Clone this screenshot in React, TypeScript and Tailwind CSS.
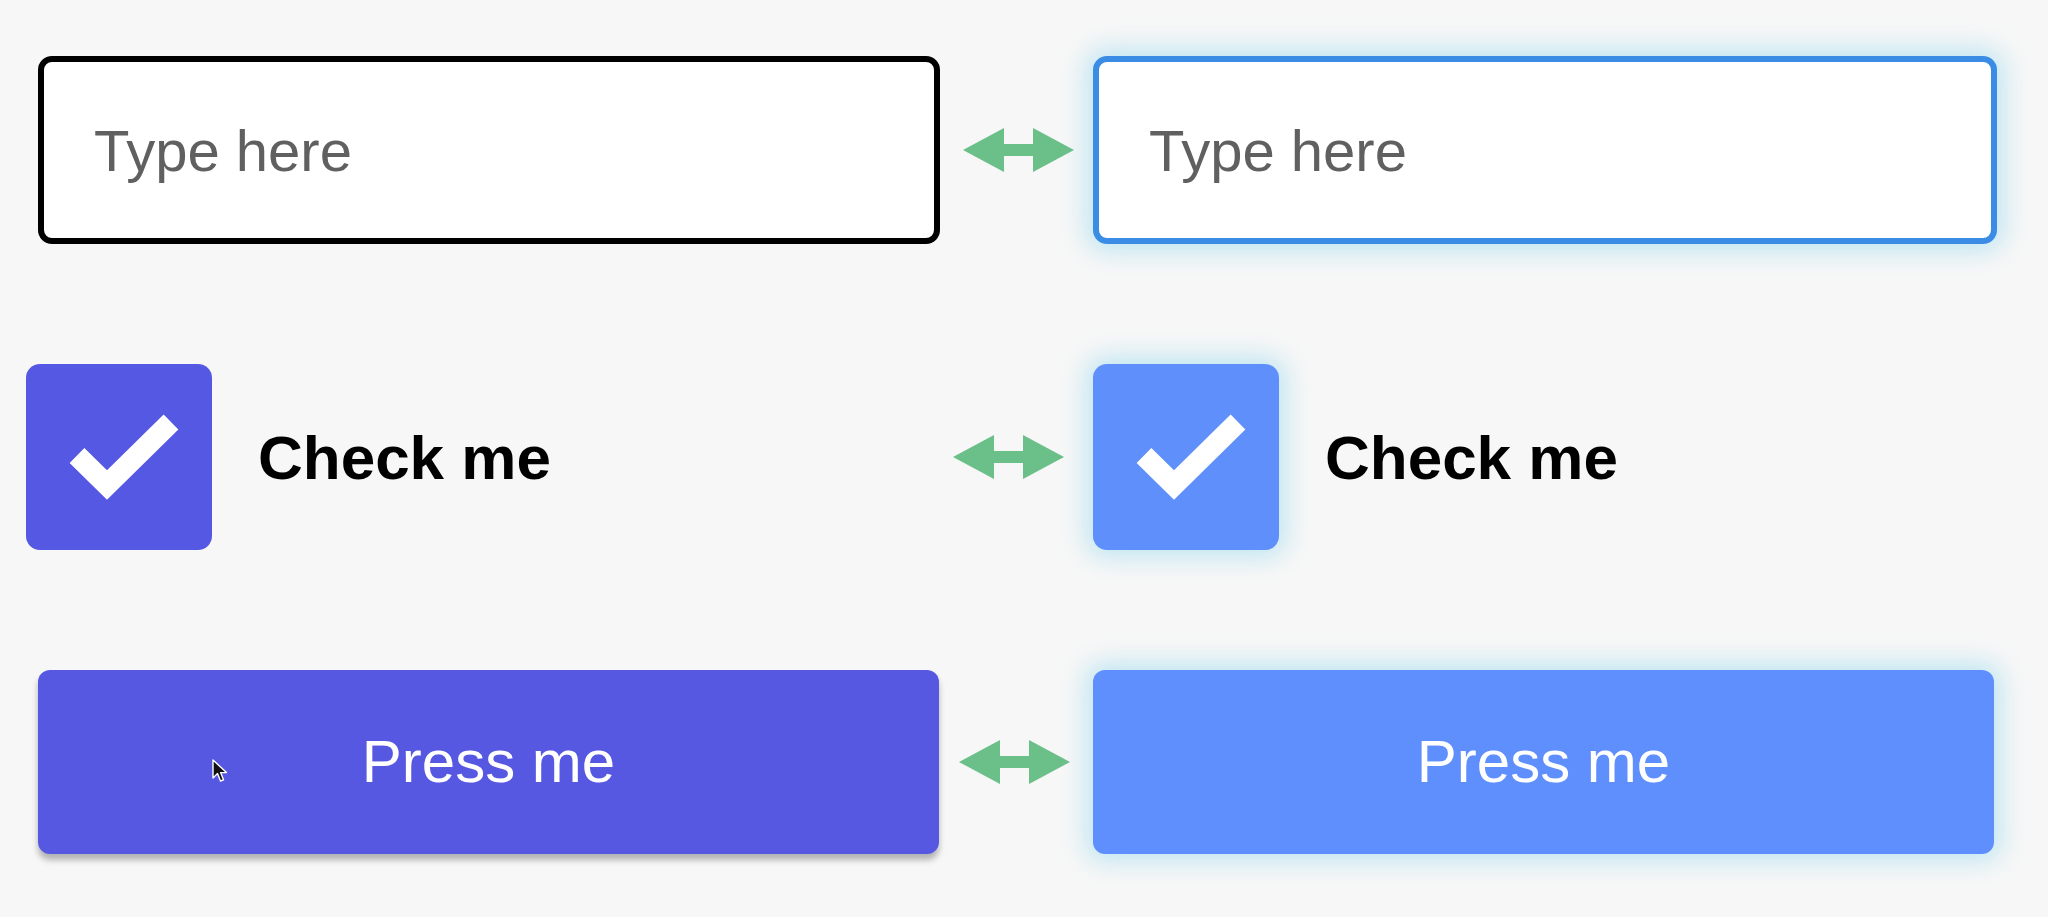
const font = "font-['Liberation_Sans',Arial,sans-serif]";

const Arrow = ({ className = "" }: { className?: string }) => (
  <svg width="111" height="44" viewBox="0 0 111 44" className={className}>
    <path d="M0 22 L41 0 L41 16 L70 16 L70 0 L111 22 L70 44 L70 28 L41 28 L41 44 Z" fill="#6bbf88" />
  </svg>
);

const Check = () => (
  <svg width="186" height="186" viewBox="0 0 186 186">
    <polyline points="51,91.5 81,121 145,58" fill="none" stroke="#fff" strokeWidth="21" strokeLinejoin="miter" />
  </svg>
);

const Cursor = () => (
  <svg width="16" height="25" viewBox="0 0 16 25" className="absolute left-[174px] top-[89px]">
    <path d="M1 1 L1 19 L5.5 14.5 L8.5 22 L11.5 20.8 L8.6 13.6 L14.5 13.6 Z" fill="#111" stroke="#fff" strokeWidth="1.4" strokeLinejoin="round" />
  </svg>
);

export default function App() {
  return (
    <div className={`min-h-[917px] w-full bg-[#f7f7f7] pl-[38px] pt-[56px] ${font}`}>
      <div className="flex flex-col gap-[120px]">
        <div className="flex items-center">
          <input
            type="text"
            placeholder="Type here"
            className="h-[188px] w-[902px] rounded-[14px] border-[6px] border-black bg-white pl-[50px] text-[58px] text-[#606060] outline-none placeholder:text-[#606060]"
          />
          <div className="flex w-[153px] justify-center">
            <Arrow className="ml-[3px]" />
          </div>
          <input
            type="text"
            placeholder="Type here"
            className="h-[188px] w-[904px] rounded-[14px] border-[6px] border-[#3a8ce4] bg-white pl-[50px] text-[58px] text-[#606060] shadow-[0_0_24px_8px_rgba(130,210,238,0.45)] outline-none placeholder:text-[#606060]"
          />
        </div>

        <div className="flex items-center">
          <div className="flex w-[902px] items-center gap-[46px]">
            <div className="-ml-[12px] flex h-[186px] w-[186px] items-center justify-center rounded-[14px] bg-[#5558e2]">
              <Check />
            </div>
            <span className="text-[62px] font-bold text-black">Check me</span>
          </div>
          <div className="flex w-[153px] justify-center">
            <Arrow className="-ml-[16px]" />
          </div>
          <div className="flex w-[904px] items-center gap-[46px]">
            <div className="flex h-[186px] w-[186px] items-center justify-center rounded-[14px] bg-[#5f8ffb] shadow-[0_0_24px_8px_rgba(130,210,238,0.45)]">
              <Check />
            </div>
            <span className="text-[62px] font-bold text-black">Check me</span>
          </div>
        </div>

        <div className="flex items-center">
          <button
            type="button"
            className="relative h-[184px] w-[901px] rounded-[12px] bg-[#5658e2] text-[60px] text-white shadow-[0_6px_6px_rgba(0,0,0,0.28)]"
          >
            Press me
            <Cursor />
          </button>
          <div className="flex w-[154px] justify-center">
            <Arrow className="-ml-[4px]" />
          </div>
          <button
            type="button"
            className="h-[184px] w-[901px] rounded-[12px] bg-[#5f8ffd] text-[60px] text-white shadow-[0_0_24px_8px_rgba(130,210,238,0.45)]"
          >
            Press me
          </button>
        </div>
      </div>
    </div>
  );
}
